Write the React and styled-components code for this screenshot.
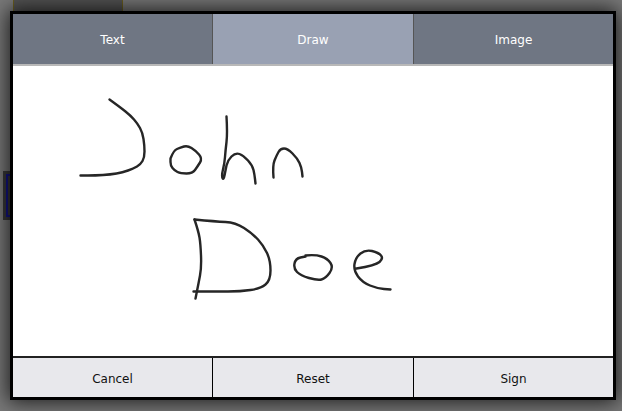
import React from "react";
import styled, { createGlobalStyle } from "styled-components";

const Global = createGlobalStyle`
  html, body {
    margin: 0;
    padding: 0;
    height: 100%;
    overflow: hidden;
    background: #7a7a7a;
  }
`;

const Page = styled.div`
  position: relative;
  width: 622px;
  height: 411px;
  padding: 11px 6px 11px 10px;
  box-sizing: border-box;
  overflow: hidden;
  background: #7a7a7a;
`;

// bits of the page showing behind the dialog
const BehindCard = styled.div`
  position: absolute;
  left: 13px;
  top: -10px;
  width: 108px;
  height: 21px;
  border: 1px solid #6b5f1f;
  background: #555;
`;

const BehindField = styled.div`
  position: absolute;
  left: 3px;
  top: 171px;
  width: 10px;
  height: 49px;
  padding: 3px 0 3px 3px;
  box-sizing: border-box;
  background: #3a3a3a;

  &::after {
    content: "";
    display: block;
    height: 100%;
    box-sizing: border-box;
    border: 2px solid #14148a;
    border-right: 0;
  }
`;

const Dialog = styled.div`
  position: relative;
  height: 389px;
  box-sizing: border-box;
  border: 3px solid #000;
  background: #fff;
  box-shadow: 0 0 20px 2px rgba(0, 0, 0, 0.8);
  display: flex;
  flex-direction: column;
  font-family: "DejaVu Sans", sans-serif;
  font-size: 12px;
`;

const Tabs = styled.div`
  display: grid;
  grid-template-columns: 199px 201px 1fr;
  height: 52px;
  box-sizing: border-box;
  border-bottom: 2px solid #b8b8b8;
`;

const Tab = styled.div`
  display: flex;
  align-items: center;
  justify-content: center;
  padding-top: 1px;
  color: #fff;
  background: ${(p) => (p.$active ? "#99a1b3" : "#6f7683")};
  border-left: ${(p) => (p.$first ? "0" : "1px solid #555")};
`;

const Canvas = styled.div`
  flex: 1;
  background: #fff;
`;

const Signature = styled.svg`
  display: block;
  width: 600px;
  height: 290px;
`;

const Footer = styled.div`
  display: grid;
  grid-template-columns: 199px 201px 1fr;
  height: 41px;
  box-sizing: border-box;
  border-top: 2px solid #222;
  background: #e8e8ec;
`;

const Action = styled.div`
  display: flex;
  align-items: center;
  justify-content: center;
  padding-top: 3px;
  color: #111;
  border-left: ${(p) => (p.$first ? "0" : "1px solid #000")};
`;

// pen points in page coordinates, shifted into the canvas by the group transform
const strokes = [
  [[109, 99], [120, 107], [130, 115], [137, 123], [142, 132], [144, 145], [144, 157], [140, 164], [133, 168], [122, 172], [110, 174], [95, 175], [80, 175]],
  [[170, 158], [173, 150], [180, 147], [187, 145], [195, 150], [202, 158], [197, 166], [192, 173], [180, 173], [174, 170], [170, 165], [170, 158]],
  [[226, 116], [227, 133], [225, 150], [224, 163], [221, 175], [223, 180], [225, 170], [227, 160], [235, 152], [243, 155], [252, 165], [254, 174], [255, 183]],
  [[273, 177], [272, 165], [276, 155], [280, 148], [287, 148], [297, 158], [301, 167], [302, 176]],
  [[194, 219], [215, 221], [235, 222], [252, 233], [263, 245], [270, 260], [270, 280], [260, 288], [240, 291], [215, 291], [193, 291]],
  [[194, 219], [198, 231], [200, 243], [201, 267], [198, 283], [195, 298]],
  [[305, 255], [315, 254], [327, 258], [333, 267], [325, 278], [317, 280], [300, 275], [293, 268], [295, 258], [305, 256]],
  [[356, 268], [375, 265], [383, 258], [378, 252], [365, 249], [355, 257], [353, 270], [362, 282], [377, 288], [390, 289]],
];

// smooth a list of points by curving through the midpoints
const toPath = (pts) => {
  let d = `M${pts[0][0]} ${pts[0][1]}`;
  for (let i = 1; i < pts.length - 1; i++) {
    const mx = (pts[i][0] + pts[i + 1][0]) / 2;
    const my = (pts[i][1] + pts[i + 1][1]) / 2;
    d += ` Q${pts[i][0]} ${pts[i][1]} ${mx} ${my}`;
  }
  const last = pts[pts.length - 1];
  return `${d} L${last[0]} ${last[1]}`;
};

export default function App() {
  return (
    <Page>
      <Global />
      <BehindCard />
      <BehindField />
      <Dialog>
        <Tabs>
          <Tab $first>Text</Tab>
          <Tab $active>Draw</Tab>
          <Tab>Image</Tab>
        </Tabs>
        <Canvas>
          <Signature viewBox="0 0 600 290">
            <g transform="translate(-12.5 -65.5)" fill="none" stroke="#262626" strokeWidth="2.4" strokeLinecap="round" strokeLinejoin="round">
              {strokes.map((pts) => (
                <path key={pts.join()} d={toPath(pts)} />
              ))}
            </g>
          </Signature>
        </Canvas>
        <Footer>
          <Action $first>Cancel</Action>
          <Action>Reset</Action>
          <Action>Sign</Action>
        </Footer>
      </Dialog>
    </Page>
  );
}
